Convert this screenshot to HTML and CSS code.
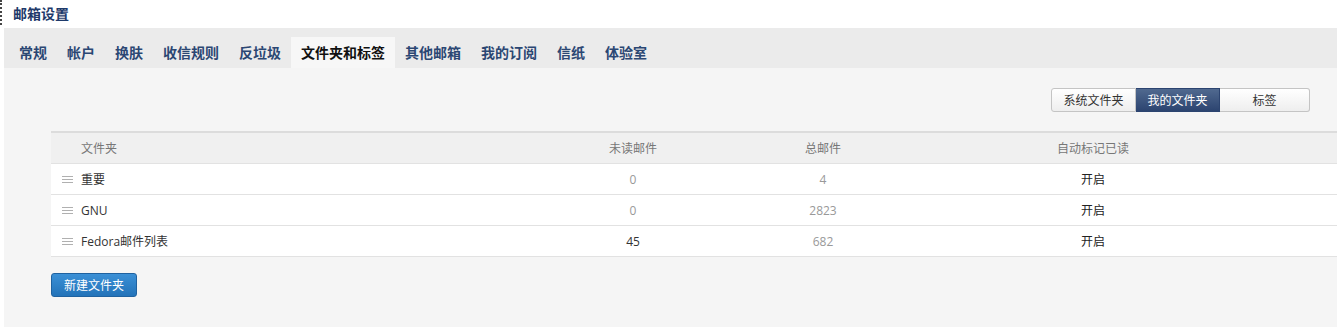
FILE: index.html
```html
<!DOCTYPE html>
<html>
<head>
    <title>邮箱设置</title>
    <link rel="stylesheet" href="styles.css">
</head>
<body>
    <div class="page-title">邮箱设置</div>
    <div class="settings">
        <ul class="tabs">
            <li>常规</li>
            <li>帐户</li>
            <li>换肤</li>
            <li>收信规则</li>
            <li>反垃圾</li>
            <li class="active">文件夹和标签</li>
            <li>其他邮箱</li>
            <li>我的订阅</li>
            <li>信纸</li>
            <li>体验室</li>
        </ul>
        <div class="content">
            <div class="seg-group">
                <button class="seg-btn">系统文件夹</button>
                <button class="seg-btn active">我的文件夹</button>
                <button class="seg-btn seg-wide">标签</button>
            </div>
            <table class="folder-table">
                <thead>
                    <tr>
                        <th class="col-name">文件夹</th>
                        <th class="col-unread">未读邮件</th>
                        <th class="col-total">总邮件</th>
                        <th class="col-auto">自动标记已读</th>
                        <th></th>
                    </tr>
                </thead>
                <tbody>
                    <tr>
                        <td class="col-name"><svg class="drag" width="11" height="7" viewBox="0 0 11 7"><path d="M0 0.5h11M0 3.5h11M0 6.5h11" stroke="#b0b0b0" stroke-width="1"/></svg>重要</td>
                        <td class="num">0</td>
                        <td class="num">4</td>
                        <td class="on">开启</td>
                        <td></td>
                    </tr>
                    <tr>
                        <td class="col-name"><svg class="drag" width="11" height="7" viewBox="0 0 11 7"><path d="M0 0.5h11M0 3.5h11M0 6.5h11" stroke="#b0b0b0" stroke-width="1"/></svg>GNU</td>
                        <td class="num">0</td>
                        <td class="num">2823</td>
                        <td class="on">开启</td>
                        <td></td>
                    </tr>
                    <tr>
                        <td class="col-name"><svg class="drag" width="11" height="7" viewBox="0 0 11 7"><path d="M0 0.5h11M0 3.5h11M0 6.5h11" stroke="#b0b0b0" stroke-width="1"/></svg>Fedora邮件列表</td>
                        <td class="num unread">45</td>
                        <td class="num">682</td>
                        <td class="on">开启</td>
                        <td></td>
                    </tr>
                </tbody>
            </table>
            <button class="btn-primary">新建文件夹</button>
        </div>
    </div>
</body>
</html>
```

FILE: styles.css
```css
body {
    margin: 0;
    font-family: "Open Sans", "Noto Sans CJK SC", sans-serif;
    font-size: 12px;
    color: #333;
    background-color: #fff;
}

.page-title {
    height: 25px;
    padding-top: 3px;
    padding-left: 11px;
    margin-bottom: 3px;
    line-height: 22px;
    border-left: 2px dotted #444;
    font-size: 14px;
    font-weight: bold;
    color: #1e3a6a;
    box-sizing: border-box;
}

.settings {
    margin-left: 4px;
}

.tabs {
    display: flex;
    align-items: flex-end;
    height: 40px;
    margin: 0;
    padding: 0 0 0 5px;
    list-style: none;
    background-color: #ebebeb;
}

.tabs li {
    height: 31px;
    line-height: 31px;
    padding: 0 10px;
    font-size: 14px;
    font-weight: bold;
    color: #2b4773;
    cursor: pointer;
}

.tabs li.active {
    background-color: #f7f7f7;
    color: #111;
}

.content {
    background-color: #f5f5f5;
    padding: 20px 0 31px 47px;
}

.seg-group {
    display: flex;
    justify-content: flex-end;
    margin-right: 27px;
    margin-bottom: 19px;
}

.seg-btn {
    height: 24px;
    width: 85px;
    padding: 0;
    font-family: inherit;
    font-size: 12px;
    color: #333;
    background: linear-gradient(#ffffff, #eeeeee);
    border: 1px solid #c4c4c4;
    border-left: none;
    cursor: pointer;
}

.seg-btn:first-child {
    border-left: 1px solid #c4c4c4;
    border-radius: 3px 0 0 3px;
}

.seg-btn:last-child {
    border-radius: 0 3px 3px 0;
}

.seg-btn.active {
    width: 84px;
    color: #fff;
    background: linear-gradient(#50698f, #2c4470);
    border-color: #2c4470;
}

.seg-wide {
    width: 90px;
}

.folder-table {
    width: 100%;
    border-collapse: collapse;
    border-top: 2px solid #dcdcdc;
}

.folder-table th,
.folder-table td {
    height: 30px;
    padding: 0;
    border-bottom: 1px solid #e2e2e2;
}

.folder-table th {
    font-weight: normal;
    color: #777;
    background-color: #f0f0f0;
}

.folder-table td {
    background-color: #fff;
    text-align: center;
}

.folder-table .col-name {
    width: 457px;
    padding-left: 30px;
    text-align: left;
    position: relative;
}

.folder-table td.col-name {
    color: #333;
}

.col-unread,
.col-total {
    width: 190px;
}

.col-auto {
    width: 350px;
}

.drag {
    position: absolute;
    left: 11px;
    top: 12px;
}

.num {
    color: #999;
}

.num.unread {
    color: #333;
}

.on {
    color: #222;
}

.btn-primary {
    margin-top: 16px;
    height: 24px;
    padding: 0 12px;
    font-family: inherit;
    font-size: 12px;
    color: #fff;
    background: linear-gradient(#3b90d6, #2373b9);
    border: 1px solid #1f62a0;
    border-radius: 3px;
    cursor: pointer;
}
```
